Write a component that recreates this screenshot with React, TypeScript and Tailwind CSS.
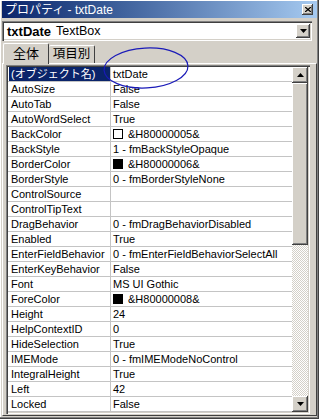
const raised =
  "shadow-[inset_-1px_-1px_#404040,inset_1px_1px_#ffffff,inset_-2px_-2px_#808080]";
const sunken =
  "shadow-[inset_1px_1px_#808080,inset_2px_2px_#404040,inset_-1px_-1px_#ffffff,inset_-2px_-2px_#d4d0c8]";

type Row = { name: string; value: string; swatch?: "white" | "black" };

const rows: Row[] = [
  { name: "(オブジェクト名)", value: "txtDate" },
  { name: "AutoSize", value: "False" },
  { name: "AutoTab", value: "False" },
  { name: "AutoWordSelect", value: "True" },
  { name: "BackColor", value: "&H80000005&", swatch: "white" },
  { name: "BackStyle", value: "1 - fmBackStyleOpaque" },
  { name: "BorderColor", value: "&H80000006&", swatch: "black" },
  { name: "BorderStyle", value: "0 - fmBorderStyleNone" },
  { name: "ControlSource", value: "" },
  { name: "ControlTipText", value: "" },
  { name: "DragBehavior", value: "0 - fmDragBehaviorDisabled" },
  { name: "Enabled", value: "True" },
  { name: "EnterFieldBehavior", value: "0 - fmEnterFieldBehaviorSelectAll" },
  { name: "EnterKeyBehavior", value: "False" },
  { name: "Font", value: "MS UI Gothic" },
  { name: "ForeColor", value: "&H80000008&", swatch: "black" },
  { name: "Height", value: "24" },
  { name: "HelpContextID", value: "0" },
  { name: "HideSelection", value: "True" },
  { name: "IMEMode", value: "0 - fmIMEModeNoControl" },
  { name: "IntegralHeight", value: "True" },
  { name: "Left", value: "42" },
  { name: "Locked", value: "False" },
];

function Arrow({ up }: { up?: boolean }) {
  return (
    <svg width="7" height="4" viewBox="0 0 7 4">
      <path d={up ? "M3.5 0 L7 4 L0 4 Z" : "M0 0 L7 0 L3.5 4 Z"} fill="#000" />
    </svg>
  );
}

export default function App() {
  return (
    <div
      className="relative flex h-[419px] w-[319px] flex-col overflow-hidden bg-[#d4d0c8] pt-[1px] pl-[2px] pr-[2px] pb-[3px] text-black shadow-[inset_-1px_-1px_#404040,inset_-2px_-2px_#808080,inset_1px_1px_#ffffff]"
      style={{ fontFamily: '"Liberation Sans", "Noto Sans CJK JP", sans-serif' }}
    >
      {/* title bar */}
      <div className="flex h-[17px] items-center justify-between bg-gradient-to-r from-[#0a246a] to-[#a6caf0] pl-[3px] pr-[4px]">
        <span className="text-[12px] leading-none text-white">プロパティ - txtDate</span>
        <div className={`flex h-[11px] w-[11px] items-center justify-center bg-[#d4d0c8] ${raised}`}>
          <svg width="6" height="5" viewBox="0 0 6 5">
            <path d="M0 0 L6 5 M6 0 L0 5" stroke="#000" strokeWidth="1.3" />
          </svg>
        </div>
      </div>

      {/* object combo */}
      <div className={`mt-[3px] flex h-[20px] w-[310px] items-center bg-white pl-[5px] pr-[2px] ${sunken}`}>
        <span className="text-[13px] font-bold leading-none">txtDate</span>
        <span className="ml-[5px] text-[12.5px] leading-none">TextBox</span>
        <div className={`ml-auto flex h-[14px] w-[14px] items-center justify-center bg-[#d4d0c8] ${raised}`}>
          <Arrow />
        </div>
      </div>

      {/* tabs */}
      <div className="relative z-10 mt-[1px] flex h-[22px] items-end pl-[1px]">
        <div className="flex h-[21px] w-[46px] items-center justify-center rounded-t-[2px] border-t border-l border-r border-t-white border-l-white border-r-[#404040] bg-[#d4d0c8] pb-[1px] text-[13px] leading-none">
          全体
        </div>
        <div className="mb-[1px] flex h-[18px] w-[46px] items-center justify-center rounded-t-[2px] border-t border-r border-t-white border-r-[#404040] text-[12.5px] leading-none">
          項目別
        </div>
      </div>

      {/* tab page */}
      <div className="-mt-[1px] flex flex-1 border-t border-l border-r border-b border-t-white border-l-white border-r-[#404040] border-b-[#404040] pt-[1px] pl-[3px]">
        <div className={`flex h-[349px] w-[304px] p-[2px] ${sunken}`}>
          <div className="flex w-[284px] flex-col bg-white text-[11px] leading-none">
            {rows.map((row, i) => (
              <div key={row.name} className="flex h-[15px] border-b border-[#c4c4c4]">
                <div className="flex w-[103px] items-center border-r border-[#c4c4c4] pl-[1px]">
                  <span
                    className={`flex h-full w-full items-center pl-[2px] ${i === 0 ? "bg-[#0a246a] text-white" : ""}`}
                  >
                    {row.name}
                  </span>
                </div>
                <div className="flex flex-1 items-center overflow-hidden whitespace-nowrap pl-[2px]">
                  {row.swatch && (
                    <span
                      className={`mr-[5px] h-[10px] w-[10px] border border-black ${row.swatch === "white" ? "bg-white" : "bg-black"}`}
                    />
                  )}
                  {row.value}
                </div>
              </div>
            ))}
          </div>

          {/* scrollbar */}
          <div className="flex w-[16px] flex-col">
            <div className={`flex h-[16px] items-center justify-center bg-[#d4d0c8] ${raised}`}>
              <Arrow up />
            </div>
            <div className={`h-[162px] bg-[#d4d0c8] ${raised}`} />
            <div className="flex-1 bg-[repeating-conic-gradient(#d4d0c8_0%_25%,#ffffff_0%_50%)] bg-[length:2px_2px]" />
            <div className={`flex h-[16px] items-center justify-center bg-[#d4d0c8] ${raised}`}>
              <Arrow />
            </div>
          </div>
        </div>
      </div>

      {/* hand-drawn annotation */}
      <svg className="pointer-events-none absolute inset-0" width="319" height="419">
        <ellipse
          cx="146"
          cy="68"
          rx="42"
          ry="20"
          transform="rotate(-3 146 68)"
          fill="none"
          stroke="#1a1ab8"
          strokeWidth="1.2"
        />
      </svg>
    </div>
  );
}
